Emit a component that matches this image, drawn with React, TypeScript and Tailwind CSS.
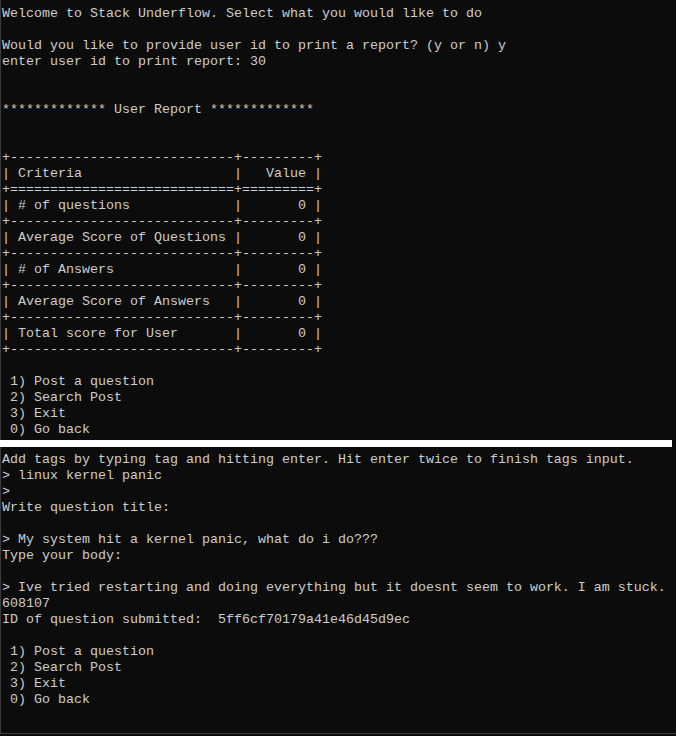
import React from 'react';

const topLines = [
  'Welcome to Stack Underflow. Select what you would like to do',
  '',
  'Would you like to provide user id to print a report? (y or n) y',
  'enter user id to print report: 30',
  '',
  '',
  '************* User Report *************',
  '',
  '',
  '+----------------------------+---------+',
  '| Criteria                   |   Value |',
  '+============================+=========+',
  '| # of questions             |       0 |',
  '+----------------------------+---------+',
  '| Average Score of Questions |       0 |',
  '+----------------------------+---------+',
  '| # of Answers               |       0 |',
  '+----------------------------+---------+',
  '| Average Score of Answers   |       0 |',
  '+----------------------------+---------+',
  '| Total score for User       |       0 |',
  '+----------------------------+---------+',
  '',
  ' 1) Post a question',
  ' 2) Search Post',
  ' 3) Exit',
  ' 0) Go back',
];

const bottomLines = [
  'Add tags by typing tag and hitting enter. Hit enter twice to finish tags input.',
  '> linux kernel panic',
  '>',
  'Write question title:',
  '',
  '> My system hit a kernel panic, what do i do???',
  'Type your body:',
  '',
  '> Ive tried restarting and doing everything but it doesnt seem to work. I am stuck.',
  '608107',
  'ID of question submitted:  5ff6cf70179a41e46d45d9ec',
  '',
  ' 1) Post a question',
  ' 2) Search Post',
  ' 3) Exit',
  ' 0) Go back',
];

function Console({ lines }: { lines: string[] }) {
  return (
    <div className="pl-[1px]">
      {lines.map((line, i) => (
        <div key={i} className="h-4 whitespace-pre">
          {line}
        </div>
      ))}
    </div>
  );
}

export default function App() {
  return (
    <div
      className="w-[676px] h-[736px] bg-[#0c0c0c] text-[#cccccc] text-[13.333px] leading-4 overflow-hidden flex flex-col"
      style={{ fontFamily: '"Liberation Mono", "DejaVu Sans Mono", monospace' }}
    >
      <div className="h-[440px] overflow-hidden border-l border-[#3c3c3c] pt-[6px]">
        <Console lines={topLines} />
      </div>
      <div className="h-[7px] w-[672px] bg-white" />
      <div className="h-[287px] overflow-hidden border-l border-b border-[#3c3c3c] pt-[5px]">
        <Console lines={bottomLines} />
      </div>
    </div>
  );
}
